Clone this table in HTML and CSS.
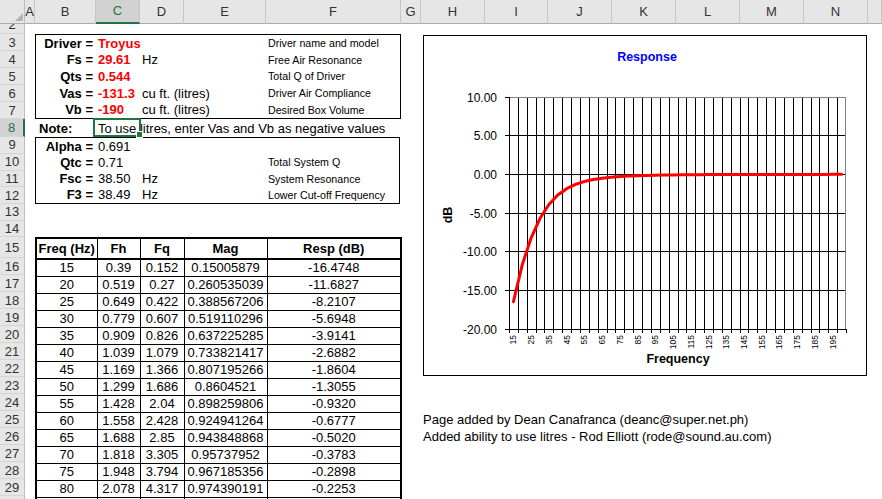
FILE: index.html
```html
<!DOCTYPE html>
<html lang="en">
<head>
<meta charset="utf-8">
<title>Sealed Box Calculator</title>
<link rel="stylesheet" href="styles.css">
</head>
<body>
<div class="sheet">
  <div class="colhdr">
    <div class="ch corner"><svg width="25" height="24" viewBox="0 0 25 24"><polygon points="23,13 23,21 15,21" fill="#b4b4b4"/></svg></div>
    <div class="ch">A</div>
    <div class="ch">B</div>
    <div class="ch sel">C</div>
    <div class="ch">D</div>
    <div class="ch">E</div>
    <div class="ch">F</div>
    <div class="ch">G</div>
    <div class="ch">H</div>
    <div class="ch">I</div>
    <div class="ch">J</div>
    <div class="ch">K</div>
    <div class="ch">L</div>
    <div class="ch">M</div>
    <div class="ch">N</div>
    <div class="ch"></div>
  </div>

  <div class="grid">
    <div class="rh r2"><span>2</span></div>
    <div class="rh">3</div>
    <div class="rh">4</div>
    <div class="rh">5</div>
    <div class="rh">6</div>
    <div class="rh">7</div>
    <div class="rh sel">8</div>
    <div class="rh">9</div>
    <div class="rh">10</div>
    <div class="rh">11</div>
    <div class="rh">12</div>
    <div class="rh">13</div>
    <div class="rh">14</div>
    <div class="rh">15</div>
    <div class="rh">16</div>
    <div class="rh">17</div>
    <div class="rh">18</div>
    <div class="rh">19</div>
    <div class="rh">20</div>
    <div class="rh">21</div>
    <div class="rh">22</div>
    <div class="rh">23</div>
    <div class="rh">24</div>
    <div class="rh">25</div>
    <div class="rh">26</div>
    <div class="rh">27</div>
    <div class="rh">28</div>
    <div class="rh">29</div>
    <div class="rh"></div>

    <div class="box box1">
      <div class="lbl">Driver =</div><div class="val red">Troyus</div><div></div><div></div><div class="desc">Driver name and model</div>
      <div class="lbl">Fs =</div><div class="val red">29.61</div><div class="unit">Hz</div><div></div><div class="desc">Free Air Resonance</div>
      <div class="lbl">Qts =</div><div class="val red">0.544</div><div></div><div></div><div class="desc">Total Q of Driver</div>
      <div class="lbl">Vas =</div><div class="val red">-131.3</div><div class="unit">cu ft. (litres)</div><div></div><div class="desc">Driver Air Compliance</div>
      <div class="lbl">Vb =</div><div class="val red">-190</div><div class="unit">cu ft. (litres)</div><div></div><div class="desc">Desired Box Volume</div>
    </div>

    <div class="note-l">Note:</div>
    <div class="note-t">To use litres, enter Vas and Vb as negative values</div>
    <div class="cursor"></div>

    <div class="box box2">
      <div class="lbl">Alpha =</div><div class="val">0.691</div><div></div><div></div><div class="desc"></div>
      <div class="lbl">Qtc =</div><div class="val">0.71</div><div></div><div></div><div class="desc">Total System Q</div>
      <div class="lbl">Fsc =</div><div class="val">38.50</div><div class="unit">Hz</div><div></div><div class="desc">System Resonance</div>
      <div class="lbl">F3 =</div><div class="val">38.49</div><div class="unit">Hz</div><div></div><div class="desc">Lower Cut-off Frequency</div>
    </div>

    <div class="tbl-wrap">
      <table class="data">
        <colgroup><col class="c1"><col class="c2"><col class="c3"><col class="c4"><col class="c5"></colgroup>
        <thead>
          <tr><th>Freq (Hz)</th><th>Fh</th><th>Fq</th><th>Mag</th><th>Resp (dB)</th></tr>
        </thead>
        <tbody>
          <tr><td>15</td><td>0.39</td><td>0.152</td><td>0.15005879</td><td>-16.4748</td></tr>
          <tr><td>20</td><td>0.519</td><td>0.27</td><td>0.260535039</td><td>-11.6827</td></tr>
          <tr><td>25</td><td>0.649</td><td>0.422</td><td>0.388567206</td><td>-8.2107</td></tr>
          <tr><td>30</td><td>0.779</td><td>0.607</td><td>0.519110296</td><td>-5.6948</td></tr>
          <tr><td>35</td><td>0.909</td><td>0.826</td><td>0.637225285</td><td>-3.9141</td></tr>
          <tr><td>40</td><td>1.039</td><td>1.079</td><td>0.733821417</td><td>-2.6882</td></tr>
          <tr><td>45</td><td>1.169</td><td>1.366</td><td>0.807195266</td><td>-1.8604</td></tr>
          <tr><td>50</td><td>1.299</td><td>1.686</td><td>0.8604521</td><td>-1.3055</td></tr>
          <tr><td>55</td><td>1.428</td><td>2.04</td><td>0.898259806</td><td>-0.9320</td></tr>
          <tr><td>60</td><td>1.558</td><td>2.428</td><td>0.924941264</td><td>-0.6777</td></tr>
          <tr><td>65</td><td>1.688</td><td>2.85</td><td>0.943848868</td><td>-0.5020</td></tr>
          <tr><td>70</td><td>1.818</td><td>3.305</td><td>0.95737952</td><td>-0.3783</td></tr>
          <tr><td>75</td><td>1.948</td><td>3.794</td><td>0.967185356</td><td>-0.2898</td></tr>
          <tr><td>80</td><td>2.078</td><td>4.317</td><td>0.974390191</td><td>-0.2253</td></tr>
          <tr><td></td><td></td><td></td><td></td><td></td></tr>
        </tbody>
      </table>
    </div>

    <div class="credit c1">Page added by Dean Canafranca (deanc@super.net.ph)</div>
    <div class="credit c2">Added ability to use litres - Rod Elliott (rode@sound.au.com)</div>
  </div>

  <div class="chart">
    <svg width="444" height="341" viewBox="0 0 444 341">
      <rect x="0.5" y="0.5" width="443" height="340" fill="#fff" stroke="#000"/>
      <text class="ctitle" x="224" y="22">Response</text>
      <path id="vgrid" d="" stroke="#000" stroke-width="1" fill="none" shape-rendering="crispEdges"/>
      <path d="M86 100.5H423M86 139.5H423M86 178.5H423M86 216.5H423M86 255.5H423" stroke="#000" stroke-width="1" fill="none" shape-rendering="crispEdges"/>
      <path d="M86 62.5H422.5V294" stroke="#808080" stroke-width="1" fill="none" shape-rendering="crispEdges"/>
      <path d="M86.5 62V294.5H423" stroke="#000" stroke-width="1" fill="none" shape-rendering="crispEdges"/>
      <path d="M82 62.5H86M82 100.5H86M82 139.5H86M82 178.5H86M82 216.5H86M82 255.5H86M82 294.5H86" stroke="#000" stroke-width="1" fill="none" shape-rendering="crispEdges"/>
      <path id="xticks" d="" stroke="#000" stroke-width="1" fill="none" shape-rendering="crispEdges"/>
      <g class="ylab">
        <text x="74" y="62.5">10.00</text>
        <text x="74" y="100.5">5.00</text>
        <text x="74" y="139.5">0.00</text>
        <text x="74" y="178.5">-5.00</text>
        <text x="74" y="216.5">-10.00</text>
        <text x="74" y="255.5">-15.00</text>
        <text x="74" y="294.5">-20.00</text>
      </g>
      <g id="xlabels" class="xlab"></g>
      <polyline id="curve" points="" fill="none" stroke="#ff0000" stroke-width="3" stroke-linejoin="round" stroke-linecap="round"/>
      <text class="atitle" x="255" y="323.5">Frequency</text>
      <text class="atitle" transform="translate(24.5 180) rotate(-90)">dB</text>
    </svg>
  </div>
</div>
<script src="script.js"></script>
</body>
</html>
```

FILE: styles.css
```css
* { box-sizing: border-box; }

body {
  margin: 0;
  background: #fff;
  font-family: "Liberation Sans", Arial, sans-serif;
  font-size: 13px;
  color: #000;
}

.sheet {
  position: relative;
  width: 882px;
  height: 499px;
  overflow: hidden;
  background: #fff;
}

.colhdr,
.grid {
  display: grid;
  grid-template-columns: 25px 10px 61px 44px 44px 82px 135px 20px 64px 63px 64px 64px 64px 64px 64px 14px;
}

.colhdr {
  height: 24px;
  background: #e6e6e6;
  border-bottom: 1px solid #ababab;
}

.ch {
  border-right: 1px solid #c6c6c6;
  text-align: center;
  line-height: 23px;
  color: #333;
  font-size: 13px;
}

.ch.corner {
  border-right: 1px solid #bdbdbd;
}

.ch.corner svg { display: block; }

.ch.sel {
  background: #d2d2d2;
  color: #217346;
  border-bottom: 2px solid #217346;
  line-height: 21px;
}

.grid {
  grid-template-rows: 10px repeat(5, 17px) 18px repeat(4, 16.75px) repeat(2, 16.5px) 21px repeat(15, 17px);
}

.rh {
  grid-column: 1;
  background: #e6e6e6;
  border-right: 1px solid #bdbdbd;
  border-bottom: 1px solid #d4d4d4;
  color: #333;
  font-size: 13px;
  display: flex;
  align-items: center;
  justify-content: center;
  overflow: hidden;
}

.rh.r2 {
  align-items: flex-end;
}

.rh.r2 span {
  line-height: 17px;
  display: block;
}

.rh.sel {
  background: #d2d2d2;
  color: #217346;
  border-right: 2px solid #217346;
}

.box {
  border: 1px solid #000;
  display: grid;
  grid-template-columns: 60px 44px 44px 82px 1fr;
  align-items: center;
  white-space: nowrap;
}

.box1 {
  grid-row: 2 / 7;
  grid-column: 3 / 8;
  grid-template-rows: repeat(5, 1fr);
}

.box2 {
  grid-row: 8 / 12;
  grid-column: 3 / 8;
  grid-template-rows: repeat(4, 1fr);
  margin-right: 1px;
}

.lbl {
  font-weight: bold;
  text-align: right;
  padding-right: 3px;
}

.val { padding-left: 2px; }

.val.red {
  color: #ff0000;
  font-weight: bold;
}

.unit { padding-left: 2px; }

.desc {
  font-size: 10.67px;
  padding-left: 2px;
}

.note-l {
  grid-row: 7;
  grid-column: 3;
  font-weight: bold;
  padding-left: 4px;
  align-self: center;
}

.note-t {
  grid-row: 7;
  grid-column: 4 / 17;
  padding-left: 2px;
  white-space: nowrap;
  align-self: center;
}

.cursor {
  grid-row: 7;
  grid-column: 4;
  position: relative;
  z-index: 2;
  margin: -1px -1px 0 -3px;
  border: 2px solid #217346;
}

.cursor::after {
  content: "";
  position: absolute;
  right: -4px;
  bottom: -3px;
  width: 5px;
  height: 5px;
  background: #217346;
  border: 1px solid #fff;
}

.tbl-wrap {
  grid-row: 14 / 30;
  grid-column: 3 / 8;
}

.data {
  border-collapse: collapse;
  table-layout: fixed;
  width: 365px;
  border: 2px solid #000;
}

.data col.c1 { width: 61px; }
.data col.c2 { width: 43px; }
.data col.c3 { width: 44px; }
.data col.c4 { width: 83px; }
.data col.c5 { width: 134px; }

.data th,
.data td {
  border: 1px solid #000;
  padding: 0;
  text-align: center;
  white-space: nowrap;
  overflow: hidden;
}

.data th {
  font-weight: bold;
  line-height: 19px;
  border-bottom: 2px solid #000;
}

.data td {
  line-height: 16px;
  height: 17px;
}

.credit {
  grid-column: 9 / 17;
  padding-left: 2px;
  white-space: nowrap;
  align-self: center;
}

.credit.c1 { grid-row: 24; }
.credit.c2 { grid-row: 25; }

.chart {
  position: absolute;
  left: 423px;
  top: 35px;
  width: 444px;
  height: 341px;
}

.chart svg {
  display: block;
  font-family: "Liberation Sans", Arial, sans-serif;
}

.ctitle {
  font-size: 12.5px;
  font-weight: bold;
  fill: #0000ff;
  text-anchor: middle;
  dominant-baseline: central;
}

.atitle {
  font-size: 12.5px;
  font-weight: bold;
  fill: #000;
  text-anchor: middle;
  dominant-baseline: central;
}

.ylab text {
  font-size: 12px;
  fill: #000;
  text-anchor: end;
  dominant-baseline: central;
}

.xlab text {
  font-size: 8.5px;
  fill: #000;
  text-anchor: end;
  dominant-baseline: central;
}
```

FILE: script.js
```js
(function () {
  var NS = "http://www.w3.org/2000/svg";
  var L = 86, R = 423, T = 62, B = 294, N = 38;
  var W = (R - L) / N;
  var ZERO = 139.33, S = (B - T) / 30;
  var FSC = 38.5, QTC = 0.708;

  var grid = "", ticks = "";
  for (var k = 0; k <= N; k++) {
    var x = Math.round(L + k * W) + 0.5;
    if (k > 0 && k < N) grid += "M" + x + " " + T + "V" + B;
    ticks += "M" + x + " " + B + "V" + (B + 4);
  }
  document.getElementById("vgrid").setAttribute("d", grid);
  document.getElementById("xticks").setAttribute("d", ticks);

  var labels = document.getElementById("xlabels");
  var pts = [];
  for (var i = 0; i < N; i++) {
    var f = 15 + 5 * i;
    var cx = L + (i + 0.5) * W;
    var fh = f / FSC;
    var fq = fh * fh;
    var mag = fq / Math.sqrt((1 - fq) * (1 - fq) + (fh / QTC) * (fh / QTC));
    var r = 20 * Math.log10(mag);
    pts.push(cx.toFixed(2) + "," + (ZERO - r * S).toFixed(2));
    if (i % 2 === 0) {
      var t = document.createElementNS(NS, "text");
      t.setAttribute("transform", "translate(" + cx.toFixed(2) + " 300) rotate(-90)");
      t.textContent = String(f);
      labels.appendChild(t);
    }
  }
  document.getElementById("curve").setAttribute("points", pts.join(" "));
})();
```
